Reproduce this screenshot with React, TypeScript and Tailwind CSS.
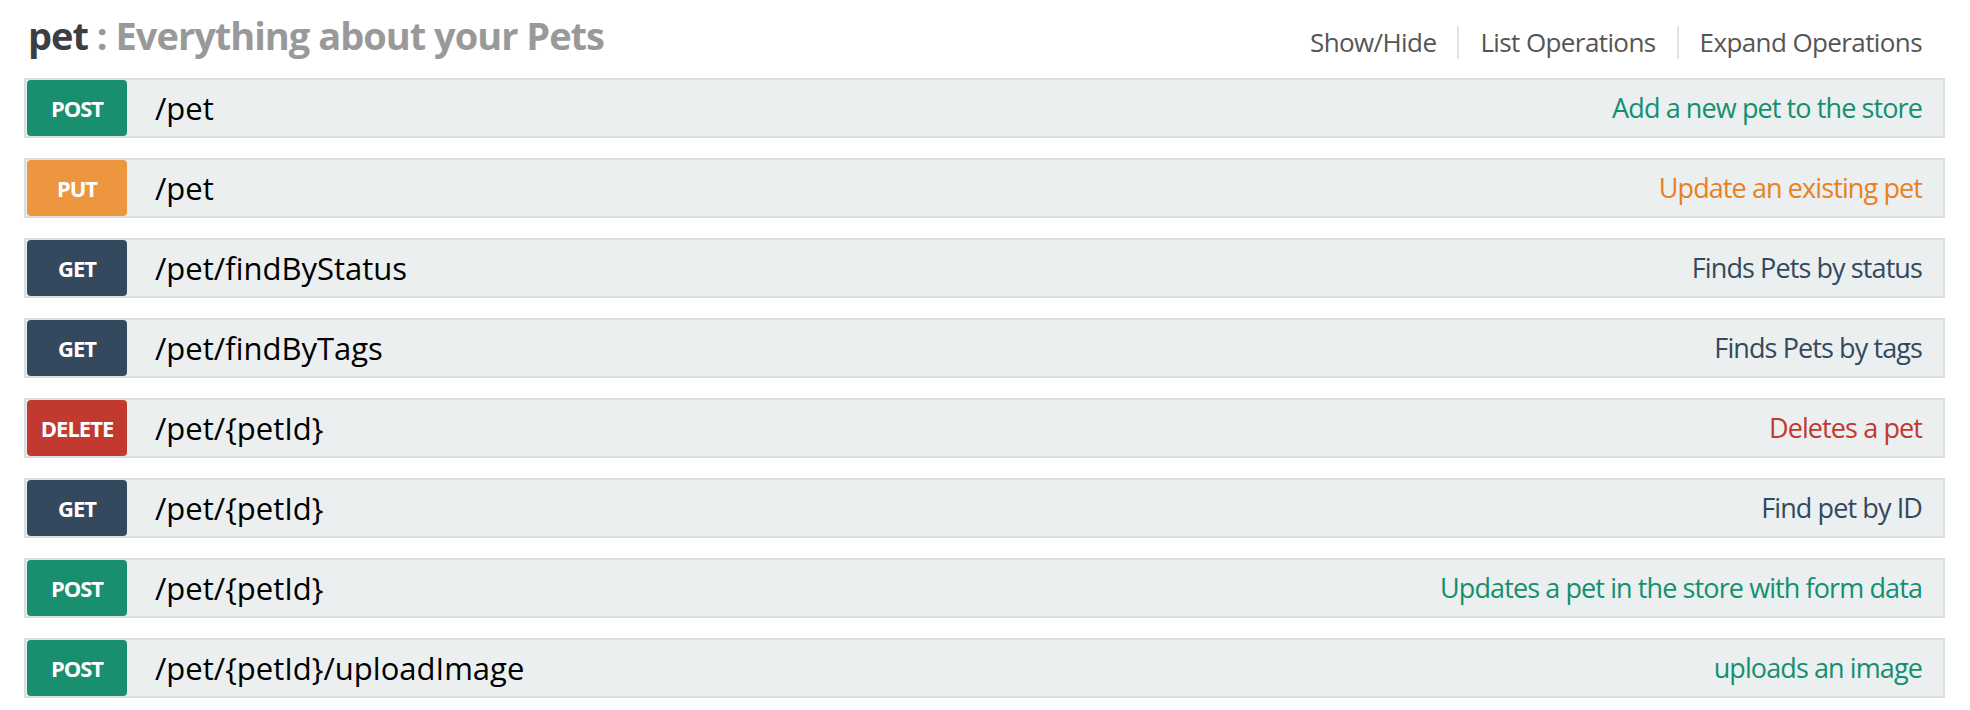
import React from 'react';

type Op = {
  method: 'GET' | 'POST' | 'PUT' | 'DELETE';
  path: string;
  summary: string;
};

const ops: Op[] = [
  { method: 'POST', path: '/pet', summary: 'Add a new pet to the store' },
  { method: 'PUT', path: '/pet', summary: 'Update an existing pet' },
  { method: 'GET', path: '/pet/findByStatus', summary: 'Finds Pets by status' },
  { method: 'GET', path: '/pet/findByTags', summary: 'Finds Pets by tags' },
  { method: 'DELETE', path: '/pet/{petId}', summary: 'Deletes a pet' },
  { method: 'GET', path: '/pet/{petId}', summary: 'Find pet by ID' },
  { method: 'POST', path: '/pet/{petId}', summary: 'Updates a pet in the store with form data' },
  { method: 'POST', path: '/pet/{petId}/uploadImage', summary: 'uploads an image' },
];

// 메서드별 색상
const badgeClass: Record<Op['method'], string> = {
  GET: 'bg-[#34495e]',
  POST: 'bg-[#18906f]',
  PUT: 'bg-[#ec973f]',
  DELETE: 'bg-[#c1392f]',
};

const summaryClass: Record<Op['method'], string> = {
  GET: 'text-[#34495e]',
  POST: 'text-[#13906f]',
  PUT: 'text-[#e8811f]',
  DELETE: 'text-[#c1392f]',
};

function OperationRow({ op }: { op: Op }) {
  return (
    <li className="flex items-center h-[60px] bg-[#ebeff0] border-2 border-[#dadfe1] pl-px pr-[21px]">
      <span
        className={`${badgeClass[op.method]} w-[100px] h-[56px] rounded-[4px] flex items-center justify-center text-white text-[22px] font-bold tracking-[-1px]`}
      >
        {op.method}
      </span>
      <span className="ml-[28px] text-[31px] text-black leading-none">{op.path}</span>
      <span className={`ml-auto text-[27px] tracking-[-0.9px] ${summaryClass[op.method]}`}>{op.summary}</span>
    </li>
  );
}

export default function App() {
  return (
    <div className="min-h-screen bg-white font-['Open_Sans',sans-serif] pl-[24px] pr-[25px]">
      {/* 헤더 */}
      <div className="flex items-start h-[78px]">
        <h2 className="mt-[16px] pl-[4px] text-[38px] font-bold leading-none tracking-[-1px]">
          <span className="text-[#3b3e44]">pet</span>
          <span className="text-[#999999]"> : Everything about your Pets</span>
        </h2>
        <ul className="mt-[26px] ml-auto mr-[23px] flex items-center text-[26px] text-[#555555] tracking-[-0.6px] leading-none">
          <li className="pr-[21px] pt-[3px] pb-[4px]">Show/Hide</li>
          <li className="px-[21px] border-l-2 border-[#e3e3e3] pt-[3px] pb-[4px]">List Operations</li>
          <li className="pl-[21px] border-l-2 border-[#e3e3e3] pt-[3px] pb-[4px]">Expand Operations</li>
        </ul>
      </div>

      {/* 오퍼레이션 목록 */}
      <ul className="flex flex-col gap-[20px]">
        {ops.map((op, i) => (
          <OperationRow key={i} op={op} />
        ))}
      </ul>
    </div>
  );
}
